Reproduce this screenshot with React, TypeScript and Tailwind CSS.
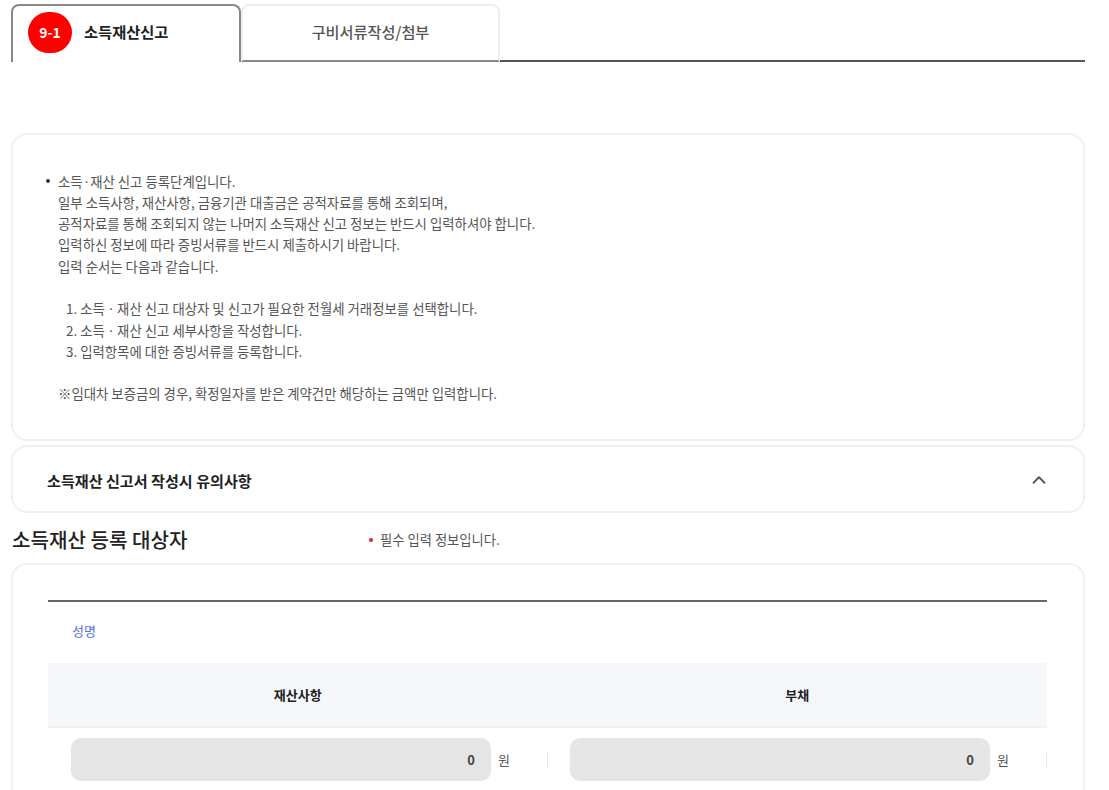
import React from 'react';
import { ChevronUp } from 'lucide-react';

const introLines = [
  '일부 소득사항, 재산사항, 금융기관 대출금은 공적자료를 통해 조회되며,',
  '공적자료를 통해 조회되지 않는 나머지 소득재산 신고 정보는 반드시 입력하셔야 합니다.',
  '입력하신 정보에 따라 증빙서류를 반드시 제출하시기 바랍니다.',
  '입력 순서는 다음과 같습니다.',
];

const steps = [
  '1. 소득ㆍ재산 신고 대상자 및 신고가 필요한 전월세 거래정보를 선택합니다.',
  '2. 소득ㆍ재산 신고 세부사항을 작성합니다.',
  '3. 입력항목에 대한 증빙서류를 등록합니다.',
];

const AmountCell: React.FC = () => (
  <div className="flex items-center">
    <div className="w-[420px] h-[43px] rounded-[10px] bg-[#e5e5e5] flex items-center justify-end pr-[16px] text-[13px] font-bold text-[#444]">
      0
    </div>
    <span className="ml-[7px] text-[13px] text-[#555]">원</span>
    <span className="ml-[37px] w-px h-[14px] bg-[#e5e5e5]" />
  </div>
);

export default function App() {
  return (
    <div className="h-[790px] overflow-hidden bg-white pl-[11px] pr-[24px] pt-[4px] font-['Noto_Sans_CJK_KR','Noto_Sans',sans-serif] text-[#333]">
      <div className="flex h-[58px]">
        <div className="w-[230px] h-[58px] rounded-t-[8px] border-2 border-b-0 border-[#888] bg-white flex items-start pl-[15px] pt-[6px]">
          <div className="flex items-center h-[41px]">
            <span className="w-[44px] h-[41px] rounded-full bg-[#ff0000] text-white text-[14px] font-bold flex items-center justify-center">
              9-1
            </span>
            <span className="ml-[12px] pb-[2px] text-[15.3px] font-bold text-[#222]">소득재산신고</span>
          </div>
        </div>
        <div className="w-[259px] h-[58px] rounded-t-[8px] border-2 border-[#eee] border-b-[#888] bg-white flex items-center justify-center pb-[4px] text-[15.2px] font-medium text-[#555]">
          구비서류작성/첨부
        </div>
        <div className="flex-1 self-end h-[2px] bg-[#555]" />
      </div>

      <div className="mt-[71px] h-[308px] rounded-[16px] border-2 border-[#f0f0f0] pt-[35.5px] pl-[33px] text-[13.4px] leading-[21.3px] text-[#555]">
        <div className="relative pl-[12px]">
          <span className="absolute left-0 top-[8px] w-[4px] h-[4px] rounded-full bg-[#333]" />
          소득·재산 신고 등록단계입니다.
          {introLines.map(line => (
            <div key={line}>{line}</div>
          ))}
          <div className="mt-[21.3px] pl-[8px]">
            {steps.map(step => (
              <div key={step}>{step}</div>
            ))}
          </div>
          <div className="mt-[21.3px]">※임대차 보증금의 경우, 확정일자를 받은 계약건만 해당하는 금액만 입력합니다.</div>
        </div>
      </div>

      <div className="mt-[4px] h-[68px] rounded-[16px] border-2 border-[#f0f0f0] flex items-center justify-between pl-[34px] pr-[33px] pt-[2px]">
        <span className="text-[15.1px] font-bold text-[#222]">소득재산 신고서 작성시 유의사항</span>
        <ChevronUp size={22} strokeWidth={2} className="text-[#555]" />
      </div>

      <div className="h-[50px] pt-[4px] flex items-center">
        <h2 className="w-[358px] pl-px text-[20.1px] font-medium text-[#222]">소득재산 등록 대상자</h2>
        <span className="w-[4px] h-[4px] rounded-full bg-[#e0202c]" />
        <span className="ml-[7px] text-[13.3px] text-[#555]">필수 입력 정보입니다.</span>
      </div>

      <div className="h-[300px] rounded-[16px] border-2 border-[#f0f0f0] pl-[35px] pr-[36px] pt-[35px]">
        <div className="h-[2px] bg-[#666]" />
        <div className="h-[61px] flex items-center pl-[24px] pb-[4px] text-[13px] text-[#5a6ee0]">성명</div>
        <div className="h-[65px] flex items-center bg-[#f5f7fb] border-b-2 border-[#f0f0f0] pt-px text-[13px] font-bold text-[#222]">
          <div className="flex-1 text-center">재산사항</div>
          <div className="flex-1 text-center">부채</div>
        </div>
        <div className="mt-[10px] grid grid-cols-[499px_1fr] pl-[23px]">
          <AmountCell />
          <AmountCell />
        </div>
      </div>
    </div>
  );
}
